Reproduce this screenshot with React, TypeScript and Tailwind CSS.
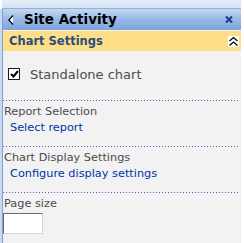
import React from "react";

function Dots() {
  return (
    <div className="h-[1px] mr-[1px] bg-[repeating-linear-gradient(to_right,#4a66c0_0px,#4a66c0_1px,transparent_1px,transparent_3px)]" />
  );
}

export default function App() {
  const font = { fontFamily: "Verdana, 'DejaVu Sans', sans-serif" };
  return (
    <div className="w-[244px] h-[243px] bg-white overflow-hidden" style={font}>
      <div className="h-[9px] bg-gradient-to-b from-[#e6eef9] to-[#d3e1f3] border-b border-[#8fb0dc] ml-[2px] mr-[3px]" />
      <div className="flex w-[241px]">
        <div className="w-[2px] bg-[#c9daf0]" />
        <div className="flex-1 flex flex-col border-l border-[#7ba1d6]">
          <div className="h-[21px] flex items-center bg-gradient-to-b from-[#c6d9f2] via-[#97b8e6] to-[#7fa5dc] pl-[5px] pr-[8px]">
            <svg width="6" height="10" viewBox="0 0 6 10" className="mr-[10px]">
              <path d="M5 0.5 L0.8 5 L5 9.5" fill="white" stroke="black" strokeWidth="1.2" />
            </svg>
            <span className="text-[13.5px] font-bold text-black leading-none">Site Activity</span>
            <svg width="8" height="7" viewBox="0 0 8 7" className="ml-auto">
              <path d="M1 0.5 L7 6.5 M7 0.5 L1 6.5" fill="none" stroke="#1d3a8c" strokeWidth="2" />
            </svg>
          </div>
          <div className="bg-[#f2f2f2] h-[213px] flex flex-col">
            <div className="mt-[1px] h-[20px] bg-[#fedf88] flex items-center pl-[6px] pr-[2px]">
              <span className="text-[11.5px] font-bold text-[#2b4d7c] leading-none mt-[1px]">Chart Settings</span>
              <svg width="11" height="11" viewBox="0 0 11 11" className="ml-auto">
                <rect width="11" height="11" fill="#fff" />
                <path d="M1.5 5 L5.5 1.5 L9.5 5 M1.5 9.5 L5.5 6 L9.5 9.5" fill="none" stroke="black" strokeWidth="1.3" />
              </svg>
            </div>
            <div className="flex items-center mt-[17px] pl-[5px] h-[12px]">
              <div className="w-[12px] h-[12px] border border-[#1c1c1c] bg-white flex items-center justify-center">
                <svg width="9" height="8" viewBox="0 0 9 8">
                  <path d="M1 4 L3.5 6.5 L8 1" fill="none" stroke="black" strokeWidth="2" />
                </svg>
              </div>
              <span className="ml-[10px] text-[13px] text-[#4c4c4c] leading-none">Standalone chart</span>
            </div>
            <div className="mt-[20px]">
              <Dots />
            </div>
            <div className="pl-[1px] text-[11.3px] text-[#4c4c4c] mt-[4px] leading-[14px]">Report Selection</div>
            <div className="pl-[7px] text-[11.3px] text-[#0033aa] mt-[2px] leading-[14px]">Select report</div>
            <div className="mt-[11px]">
              <Dots />
            </div>
            <div className="pl-[1px] text-[11.3px] text-[#4c4c4c] mt-[4px] leading-[14px]">Chart Display Settings</div>
            <div className="pl-[7px] text-[11.3px] text-[#0033aa] mt-[2px] leading-[14px]">Configure display settings</div>
            <div className="mt-[11px]">
              <Dots />
            </div>
            <div className="pl-[1px] text-[11.3px] text-[#4c4c4c] mt-[4px] leading-[14px]">Page size</div>
            <div className="ml-[0px] mt-[2px] w-[40px] h-[21px] bg-white border border-[#6a6a6a] border-r-[#d4d4d4] border-b-[#d4d4d4]" />
          </div>
        </div>
      </div>
    </div>
  );
}
